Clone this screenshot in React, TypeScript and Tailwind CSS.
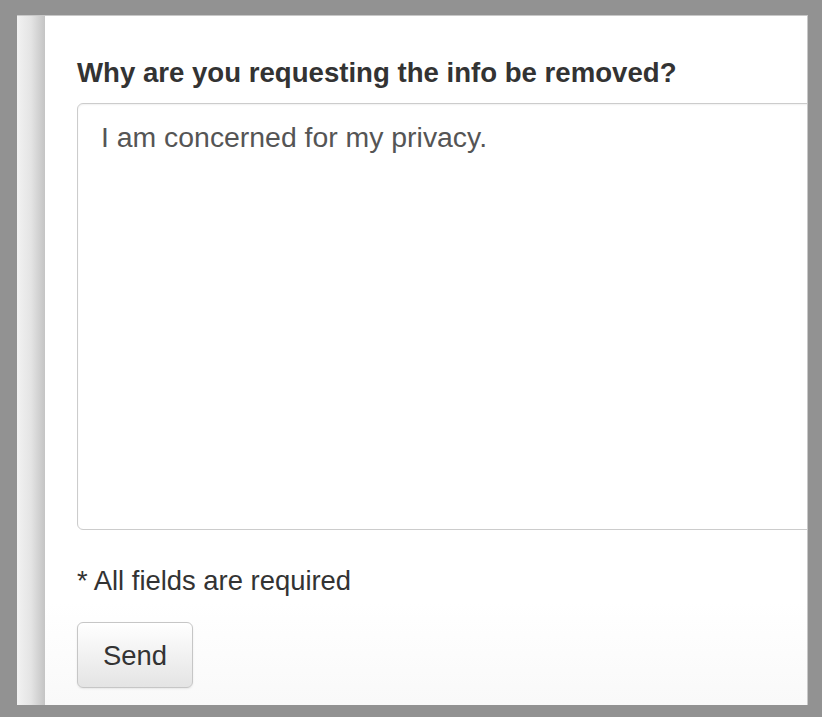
export default function App() {
  return (
    <div
      className="w-[822px] h-[717px] bg-[#929292] pt-[15px] pl-[17px] pr-[14px] pb-[12px] flex overflow-hidden"
      style={{ fontFamily: '"Liberation Sans", Arial, sans-serif' }}
    >
      <div className="w-[28px] shrink-0 bg-gradient-to-r from-[#f2f2f2] via-[#e4e4e4] to-[#c4c4c4] border-t border-[#c8c8c8]" />
      <div className="flex-1 bg-gradient-to-b from-white from-85% to-[#f9f9f9] border-t border-r border-[#c8c8c8] overflow-hidden pl-[32px] pt-[41px]">
        <h2 className="text-[27.6px] leading-[31px] font-bold text-[#333] whitespace-nowrap">
          Why are you requesting the info be removed?
        </h2>
        <textarea
          readOnly
          defaultValue="I am concerned for my privacy."
          className="mt-[15px] block w-[780px] h-[427px] resize-none rounded-[6px] border border-[#cccccc] bg-white px-[23px] pt-[18px] text-[28.4px] leading-[31px] text-[#555] outline-none shadow-[inset_0_1px_2px_rgba(0,0,0,0.06)]"
          style={{ fontFamily: '"Liberation Sans", Arial, sans-serif' }}
        />
        <p className="mt-[35px] text-[27.4px] leading-[31px] text-[#333]">* All fields are required</p>
        <button className="mt-[26px] w-[116px] h-[66px] rounded-[6px] border border-[#c6c6c6] bg-gradient-to-b from-white to-[#e4e4e4] text-[27.4px] leading-[31px] text-[#333] shadow-[0_1px_2px_rgba(0,0,0,0.08)]">
          Send
        </button>
      </div>
    </div>
  );
}
